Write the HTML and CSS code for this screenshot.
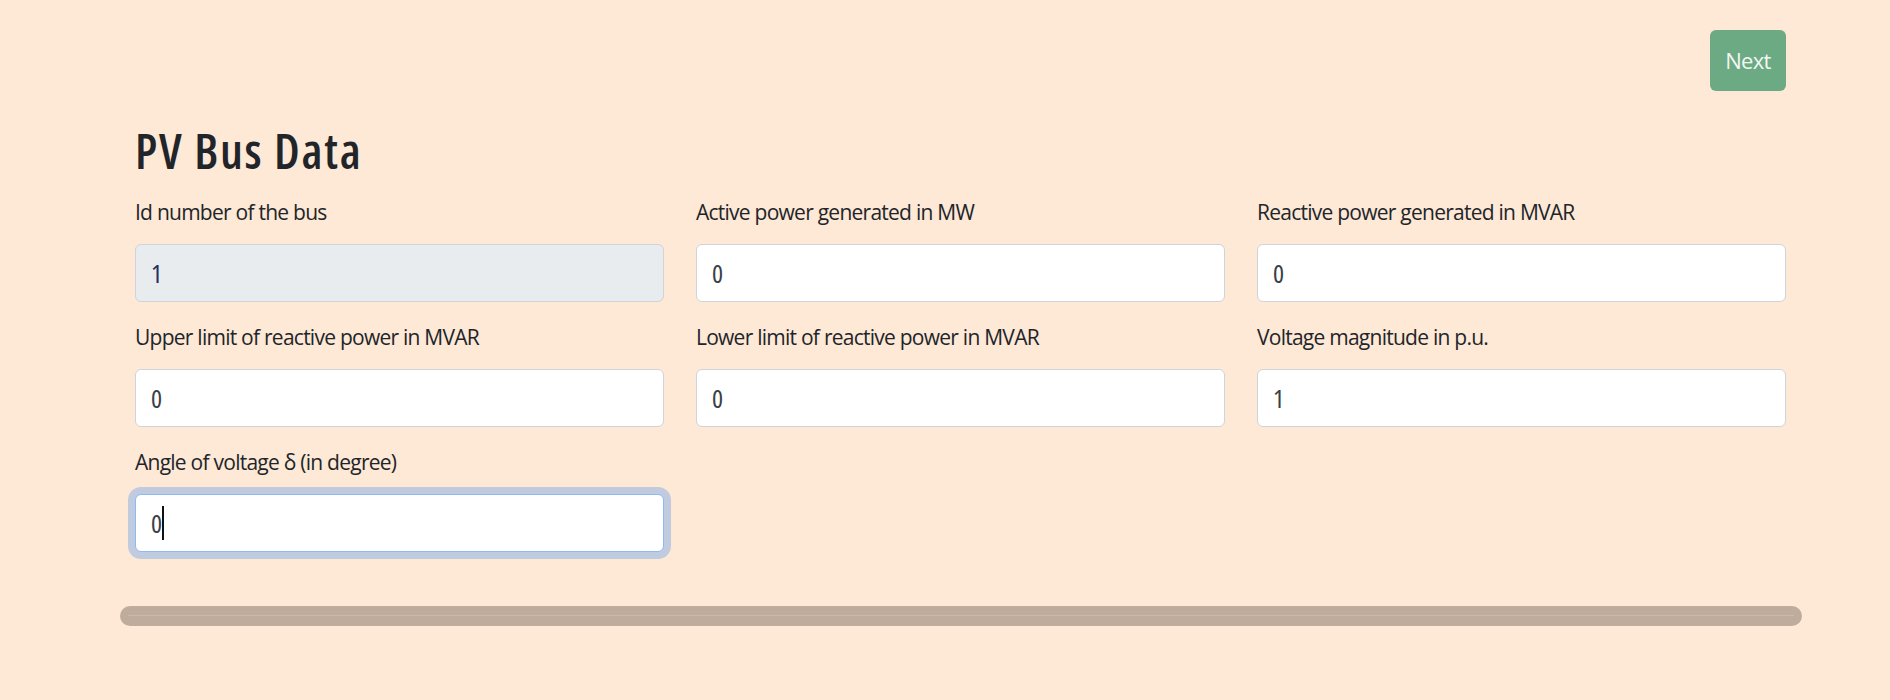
FILE: index.html
```html
<!DOCTYPE html>
<html lang="en">
<head>
<meta charset="utf-8">
<title>PV Bus Data</title>
<link rel="stylesheet" href="styles.css">
</head>
<body>
<div class="page">
  <div class="topbar">
    <button class="btn-next" type="button">Next</button>
  </div>
  <div class="content">
    <h2 class="title">PV Bus Data</h2>
    <form class="grid">
      <div class="field">
        <label class="label">Id number of the bus</label>
        <input class="input readonly" type="text" value="1" readonly>
      </div>
      <div class="field">
        <label class="label">Active power generated in MW</label>
        <input class="input" type="text" value="0">
      </div>
      <div class="field">
        <label class="label">Reactive power generated in MVAR</label>
        <input class="input" type="text" value="0">
      </div>
      <div class="field">
        <label class="label">Upper limit of reactive power in MVAR</label>
        <input class="input" type="text" value="0">
      </div>
      <div class="field">
        <label class="label">Lower limit of reactive power in MVAR</label>
        <input class="input" type="text" value="0">
      </div>
      <div class="field">
        <label class="label">Voltage magnitude in p.u.</label>
        <input class="input" type="text" value="1">
      </div>
      <div class="field">
        <label class="label">Angle of voltage δ (in degree)</label>
        <div class="input-wrap">
          <input class="input focused" type="text" value="0">
          <span class="caret"></span>
        </div>
      </div>
    </form>
  </div>
  <div class="bar"></div>
</div>
</body>
</html>
```
FILE: styles.css
```css
html, body {
  margin: 0;
  padding: 0;
  background: #fee8d6;
}
body {
  font-family: "Open Sans", Lato, sans-serif;
  color: #212529;
}
.page {
  width: 1682px;
  margin-left: 120px;
  padding-top: 30px;
}
.topbar {
  display: flex;
  justify-content: flex-end;
  padding-right: 16px;
}
.btn-next {
  width: 76px;
  height: 61px;
  padding: 0;
  font-family: "Open Sans", sans-serif;
  font-weight: 400;
  font-size: 22px;
  letter-spacing: -0.7px;
  line-height: 35px;
  border: 0;
  border-radius: 6px;
  background: #6caa84;
  color: #f3f7f3;
}
.content {
  padding: 0 16px 0 15px;
}
.title {
  margin: 31px 0 16px;
  font-family: "Open Sans", sans-serif;
  font-weight: 600;
  font-stretch: 75%;
  font-size: 48px;
  letter-spacing: 1.8px;
  line-height: 58px;
  color: #212529;
}
.grid {
  display: grid;
  grid-template-columns: repeat(3, 1fr);
  column-gap: 32px;
  row-gap: 19px;
  margin: 0;
}
.field {
  display: flex;
  flex-direction: column;
}
.label {
  font-size: 21px;
  font-weight: 400;
  letter-spacing: -0.75px;
  line-height: 33px;
  margin-bottom: 15px;
  color: #212529;
}
.input-wrap {
  position: relative;
}
.input {
  box-sizing: border-box;
  width: 100%;
  height: 58px;
  margin: 0;
  padding: 0 15px;
  font-family: "Open Sans", sans-serif;
  font-stretch: 75%;
  font-weight: 400;
  font-size: 26px;
  color: #3a4047;
  background: #ffffff;
  border: 1px solid #ced4da;
  border-radius: 6px;
  outline: none;
}
.input.readonly {
  background: #e9ecef;
  color: #26305a;
}
.input.focused {
  border-color: #8bbaf6;
  box-shadow: 0 0 0 7px #c1cbe0;
  caret-color: transparent;
}
.caret {
  position: absolute;
  left: 27px;
  top: 12px;
  width: 2px;
  height: 34px;
  background: #111;
}
.bar {
  position: relative;
  margin-top: 54px;
  height: 20px;
  border-radius: 10px;
  background: #c0ac9d;
}
.bar::after {
  content: "";
  position: absolute;
  left: 8px;
  right: 8px;
  top: 9px;
  height: 1px;
  background: #cbb9ab;
}
```
